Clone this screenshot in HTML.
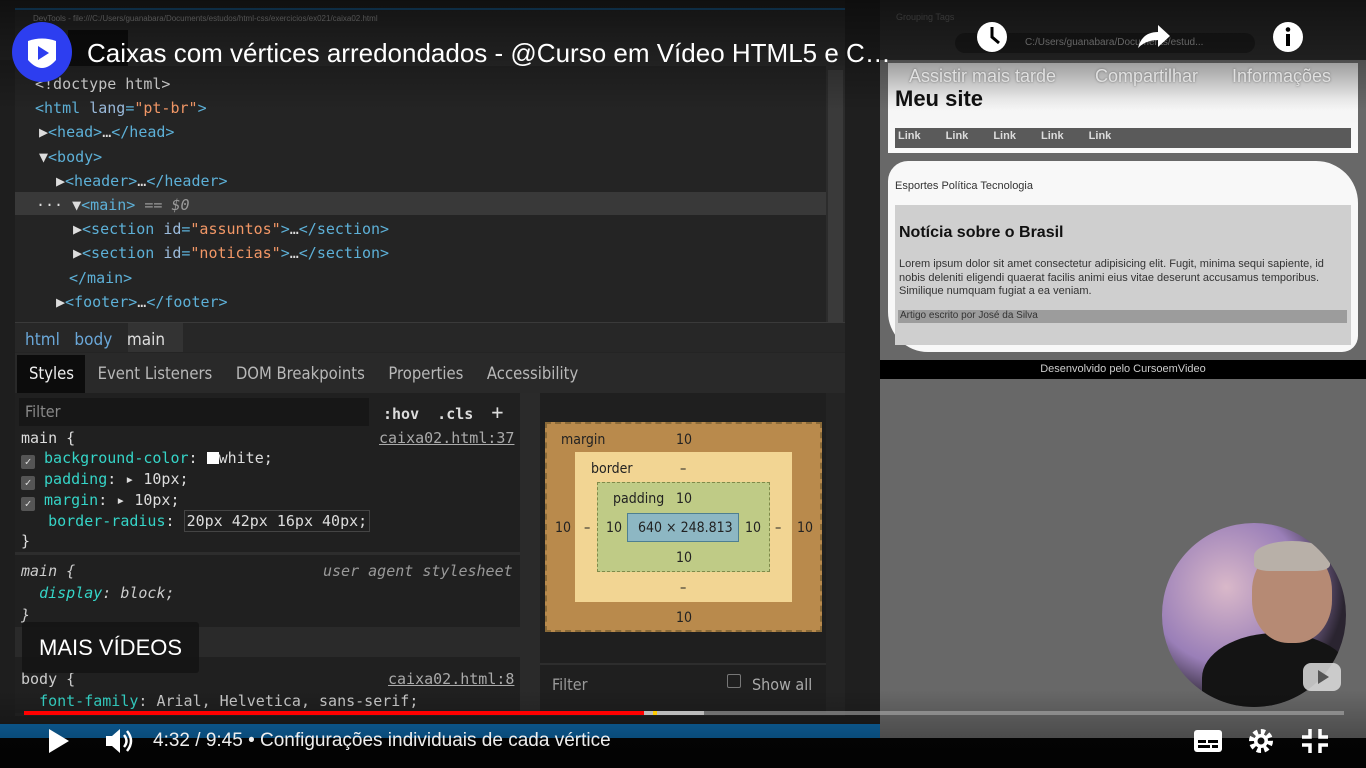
<!DOCTYPE html>
<html><head><meta charset="utf-8"><style>
*{margin:0;padding:0;box-sizing:border-box}
body{width:1366px;height:768px;overflow:hidden;background:#1c1c1c;position:relative;font-family:"Liberation Sans",sans-serif}
.a{position:absolute}
.mono{font-family:"DejaVu Sans Mono","Liberation Mono",monospace;font-size:15px;white-space:nowrap}
.tag{color:#5db0d7}.attr{color:#9bbbdc}.val{color:#f29766}.txt{color:#ddd}
.prop{color:#35d4c7}.w{color:#e8e8e8}
.ui{font-family:"DejaVu Sans Condensed","Liberation Sans",sans-serif;font-size:16px;color:#b8b8b8;white-space:nowrap}
</style></head><body>
<div class="a" style="left:0;top:0;width:880px;height:740px;background:#242424"></div>
<div class="a" style="left:15px;top:8px;width:830px;height:2px;background:#1b5a8a"></div>
<div class="a" style="left:15px;top:10px;width:830px;height:18px;background:#2a2a2a;font-size:8px;color:#999;padding:4px 18px">DevTools - file:///C:/Users/guanabara/Documents/estudos/html-css/exercicios/ex021/caixa02.html</div>
<div class="a" style="left:15px;top:28px;width:830px;height:38px;background:#2b2b2b"></div>
<div class="a" style="left:68px;top:30px;width:60px;height:36px;background:#0f0f0f"></div>
<div class="a" style="left:0;top:60px;width:15px;height:680px;background:#1e1e1e"></div>
<div class="a" style="left:15px;top:66px;width:811px;height:256px;background:#242424"></div>
<div class="a" style="left:15px;top:192px;width:811px;height:23px;background:#393939"></div>
<div class="a" style="left:826px;top:66px;width:19px;height:256px;background:#2c2c2c"></div>
<div class="a" style="left:828px;top:70px;width:15px;height:270px;background:#3a3a3a"></div>
<div class="a mono" style="left:35px;top:72px;line-height:24.2px">
<div class="txt">&lt;!doctype html&gt;</div>
<div><span class="tag">&lt;html</span> <span class="attr">lang</span><span class="tag">=</span><span class="val">"pt-br"</span><span class="tag">&gt;</span></div>
<div style="padding-left:4px"><span class="txt">▶</span><span class="tag">&lt;head&gt;</span><span class="txt">…</span><span class="tag">&lt;/head&gt;</span></div>
<div style="padding-left:4px"><span class="txt">▼</span><span class="tag">&lt;body&gt;</span></div>
<div style="padding-left:21px"><span class="txt">▶</span><span class="tag">&lt;header&gt;</span><span class="txt">…</span><span class="tag">&lt;/header&gt;</span></div>
<div style="padding-left:21px;margin-left:-20px"><span class="txt">··· ▼</span><span class="tag">&lt;main&gt;</span> <span style="color:#999">== <i>$0</i></span></div>
<div style="padding-left:38px"><span class="txt">▶</span><span class="tag">&lt;section</span> <span class="attr">id</span><span class="tag">=</span><span class="val">"assuntos"</span><span class="tag">&gt;</span><span class="txt">…</span><span class="tag">&lt;/section&gt;</span></div>
<div style="padding-left:38px"><span class="txt">▶</span><span class="tag">&lt;section</span> <span class="attr">id</span><span class="tag">=</span><span class="val">"noticias"</span><span class="tag">&gt;</span><span class="txt">…</span><span class="tag">&lt;/section&gt;</span></div>
<div style="padding-left:34px"><span class="tag">&lt;/main&gt;</span></div>
<div style="padding-left:21px"><span class="txt">▶</span><span class="tag">&lt;footer&gt;</span><span class="txt">…</span><span class="tag">&lt;/footer&gt;</span></div>
</div>
<div class="a" style="left:15px;top:322px;width:830px;height:30px;background:#272727;border-top:1px solid #3a3a3a"></div>
<div class="a" style="left:128px;top:323px;width:55px;height:29px;background:#333"></div>
<div class="a ui" style="left:25px;top:330px;font-size:17px"><span style="color:#6aa7d8">html</span>&nbsp;&nbsp;&nbsp;<span style="color:#6aa7d8">body</span>&nbsp;&nbsp;&nbsp;<span style="color:#ddd">main</span></div>
<div class="a" style="left:15px;top:353px;width:830px;height:40px;background:#292929"></div>
<div class="a" style="left:17px;top:355px;width:68px;height:38px;background:#0c0c0c"></div>
<div class="a ui" style="left:29px;top:364px;font-size:16.5px"><span style="color:#eee">Styles</span>&nbsp;&nbsp;&nbsp;&nbsp;&nbsp;Event Listeners&nbsp;&nbsp;&nbsp;&nbsp;&nbsp;DOM Breakpoints&nbsp;&nbsp;&nbsp;&nbsp;&nbsp;Properties&nbsp;&nbsp;&nbsp;&nbsp;&nbsp;Accessibility</div>
<div class="a" style="left:15px;top:393px;width:508px;height:320px;background:#202020"></div>
<div class="a" style="left:19px;top:398px;width:350px;height:28px;background:#171717"></div>
<div class="a ui" style="left:25px;top:402px;color:#888">Filter</div>
<div class="a mono" style="left:383px;top:400px;color:#ddd;font-weight:bold">:hov&nbsp; .cls&nbsp; <span style="font-size:20px;font-weight:normal">+</span></div>
<div class="a" style="left:520px;top:393px;width:20px;height:320px;background:#2a2a2a"></div>
<div class="a mono" style="left:21px;top:428px;line-height:20px;color:#ddd">
<div>main {<span style="position:absolute;left:358px;text-decoration:underline;color:#aaa">caixa02.html:37</span></div>
<div><span style="display:inline-block;width:14px;height:14px;background:#555;border-radius:2px;vertical-align:-2px;color:#ddd;font-size:11px;text-align:center;line-height:14px">✓</span> <span class="prop">background-color</span>: <span style="display:inline-block;width:12px;height:12px;background:#fff;vertical-align:-1px"></span>white;</div>
<div><span style="display:inline-block;width:14px;height:14px;background:#555;border-radius:2px;vertical-align:-2px;font-size:11px;text-align:center;line-height:14px">✓</span> <span class="prop">padding</span>: ▸ 10px;</div>
<div><span style="display:inline-block;width:14px;height:14px;background:#555;border-radius:2px;vertical-align:-2px;font-size:11px;text-align:center;line-height:14px">✓</span> <span class="prop">margin</span>: ▸ 10px;</div>
<div>&nbsp;&nbsp;&nbsp;<span class="prop">border-radius</span>: <span style="border:1px solid #444;padding:1px 2px">20px 42px 16px 40px;</span></div>
<div>}</div>
</div>
<div class="a" style="left:15px;top:552px;width:505px;height:3px;background:#2d2d2d"></div>
<div class="a mono" style="left:21px;top:560px;line-height:22px;color:#ccc;font-style:italic">
<div>main {<span style="position:absolute;left:302px;color:#999">user agent stylesheet</span></div>
<div>&nbsp;&nbsp;<span class="prop">display</span>: block;</div>
<div>}</div>
</div>
<div class="a" style="left:15px;top:627px;width:505px;height:30px;background:#2a2a2a"></div>
<div class="a mono" style="left:21px;top:668px;line-height:22px;color:#ccc">
<div>body {<span style="position:absolute;left:367px;text-decoration:underline;color:#aaa">caixa02.html:8</span></div>
<div>&nbsp;&nbsp;<span class="prop">font-family</span>: Arial, Helvetica, sans-serif;</div>
</div>
<div class="a" style="left:540px;top:393px;width:286px;height:320px;background:#1f1f1f"></div>
<div class="a" style="left:545px;top:422px;width:277px;height:210px;background:#b98a4c;border:2px dashed #8a6a38"></div>
<div class="a" style="left:575px;top:452px;width:217px;height:150px;background:#f2d593"></div>
<div class="a" style="left:597px;top:482px;width:173px;height:90px;background:#bfcb86;border:1px dashed #7f8a4a"></div>
<div class="a" style="left:627px;top:513px;width:112px;height:29px;background:#8db7c3;border:1px solid #4e7f90"></div>
<div class="a ui" style="font-family:'DejaVu Sans Condensed',sans-serif;font-size:14px;color:#222;left:0;top:0">
<span class="a" style="left:561px;top:432px">margin</span><span class="a" style="left:676px;top:432px">10</span>
<span class="a" style="left:591px;top:461px">border</span><span class="a" style="left:680px;top:461px">–</span>
<span class="a" style="left:613px;top:491px">padding</span><span class="a" style="left:676px;top:491px">10</span>
<span class="a" style="left:638px;top:520px">640 × 248.813</span>
<span class="a" style="left:555px;top:520px">10</span><span class="a" style="left:584px;top:520px">–</span><span class="a" style="left:606px;top:520px">10</span>
<span class="a" style="left:745px;top:520px">10</span><span class="a" style="left:775px;top:520px">–</span><span class="a" style="left:797px;top:520px">10</span>
<span class="a" style="left:676px;top:550px">10</span><span class="a" style="left:680px;top:580px">–</span><span class="a" style="left:676px;top:610px">10</span>
</div>
<div class="a" style="left:540px;top:663px;width:286px;height:2px;background:#2d2d2d"></div>
<div class="a ui" style="left:552px;top:675px;color:#999">Filter</div>
<div class="a" style="left:727px;top:674px;width:14px;height:14px;border:1px solid #777;border-radius:2px"></div>
<div class="a ui" style="left:752px;top:675px;color:#aaa">Show all</div>
<div class="a" style="left:845px;top:0;width:35px;height:740px;background:#1f1f1f"></div>
<div class="a" style="left:880px;top:0;width:486px;height:60px;background:#2a2a2a"></div>
<div class="a" style="left:955px;top:33px;width:300px;height:20px;border-radius:10px;background:#1c1c1c;font-size:10px;color:#999;padding:4px 0 0 70px">C:/Users/guanabara/Documents/estud...</div>
<div class="a" style="left:896px;top:12px;font-size:9px;color:#666">Grouping Tags</div>
<div class="a" style="left:880px;top:60px;width:486px;height:680px;background:#686868"></div>
<div class="a" style="left:888px;top:63px;width:470px;height:90px;background:linear-gradient(#d0d0d0,#f4f4f4 40%,#fafafa)"></div>
<div class="a" style="left:895px;top:86px;font-size:22px;font-weight:bold;color:#111">Meu site</div>
<div class="a" style="left:895px;top:128px;width:456px;height:20px;background:#5a5a5a;font-size:11px;font-weight:bold;color:#ddd;padding:2px 0 0 3px;word-spacing:22px">Link Link Link Link Link</div>
<div class="a" style="left:888px;top:161px;width:470px;height:191px;background:#f8f8f8;border-radius:20px 42px 16px 40px"></div>
<div class="a" style="left:895px;top:180px;font-size:11px;color:#333">Esportes Política Tecnologia</div>
<div class="a" style="left:895px;top:205px;width:456px;height:140px;background:#cfcfcf"></div>
<div class="a" style="left:899px;top:224px;font-size:16px;font-weight:bold;color:#111">Notícia sobre o Brasil</div>
<div class="a" style="left:899px;top:258px;width:450px;font-size:11px;line-height:13.5px;color:#333">Lorem ipsum dolor sit amet consectetur adipisicing elit. Fugit, minima sequi sapiente, id nobis deleniti eligendi quaerat facilis animi eius vitae deserunt accusamus temporibus. Similique numquam fugiat a ea veniam.</div>
<div class="a" style="left:898px;top:310px;width:449px;height:13px;background:#9c9c9c;font-size:10px;color:#333;padding-left:2px">Artigo escrito por José da Silva</div>
<div class="a" style="left:880px;top:360px;width:486px;height:19px;background:#000;color:#ccc;font-size:11px;text-align:center;padding-top:3px">Desenvolvido pelo CursoemVideo</div>
<div class="a" style="left:1162px;top:523px;width:184px;height:184px;border-radius:50%;background:radial-gradient(circle at 35% 35%,#d9b8c9,#9a7fb8 45%,#2a2430 70%);overflow:hidden">
<div class="a" style="left:40px;top:110px;width:150px;height:90px;background:#141414;border-radius:50% 50% 0 0"></div>
<div class="a" style="left:90px;top:25px;width:80px;height:95px;border-radius:45%;background:#b68a74"></div>
<div class="a" style="left:92px;top:18px;width:76px;height:30px;border-radius:50% 50% 20% 20%;background:#b8b0a8"></div>
</div>
<svg class="a" style="left:1302px;top:662px" width="40" height="30"><rect x="1" y="1" width="38" height="28" rx="8" fill="#ddd" opacity=".85"/><path d="M16 8 L27 15 L16 22Z" fill="#555"/></svg>
<div class="a" style="left:0;top:0;width:1366px;height:110px;background:linear-gradient(rgba(0,0,0,.55),rgba(0,0,0,0))"></div>
<svg class="a" style="left:12px;top:22px" width="60" height="60"><circle cx="30" cy="30" r="30" fill="#2d3ef0"/><path d="M16 19 Q30 14 44 19 L44 38 Q37 46 30 46 Q23 46 16 38Z" fill="#fff"/><path d="M26 24 L37 31 L26 38Z" fill="#2d3ef0"/></svg>
<div class="a" style="left:87px;top:38px;font-size:26px;color:#fff;white-space:nowrap">Caixas com vértices arredondados - @Curso em Vídeo HTML5 e C…</div>
<svg class="a" style="left:975px;top:20px" width="34" height="34"><circle cx="17" cy="17" r="15" fill="#fff"/><path d="M17 7 V17 L24 23" stroke="#000" stroke-width="3" fill="none"/></svg>
<svg class="a" style="left:1136px;top:22px" width="36" height="28"><path d="M2 26 Q6 10 22 10 V3 L34 14 L22 25 V18 Q10 18 2 26Z" fill="#fff"/></svg>
<svg class="a" style="left:1271px;top:20px" width="34" height="34"><circle cx="17" cy="17" r="15" fill="#fff"/><rect x="15" y="14" width="4" height="12" fill="#000"/><circle cx="17" cy="9.5" r="2.3" fill="#000"/></svg>
<div class="a" style="left:909px;top:66px;font-size:18px;color:#e0e0e0;white-space:nowrap;text-shadow:0 0 2px #666">Assistir mais tarde</div>
<div class="a" style="left:1095px;top:66px;font-size:18px;color:#e0e0e0;white-space:nowrap;text-shadow:0 0 2px #666">Compartilhar</div>
<div class="a" style="left:1232px;top:66px;font-size:18px;color:#e0e0e0;white-space:nowrap;text-shadow:0 0 2px #666">Informações</div>
<div class="a" style="left:22px;top:622px;width:177px;height:51px;background:rgba(20,20,20,.9);border-radius:3px"></div>
<div class="a" style="left:39px;top:635px;font-size:22px;color:#fff">MAIS VÍDEOS</div>
<div class="a" style="left:0;top:716px;width:880px;height:8px;background:#1e1e1e"></div>
<div class="a" style="left:0;top:724px;width:880px;height:14px;background:#0e68a8"></div>
<div class="a" style="left:0;top:738px;width:1366px;height:30px;background:#050505"></div>
<div class="a" style="left:0;top:690px;width:1366px;height:78px;background:linear-gradient(rgba(0,0,0,0),rgba(0,0,0,.45))"></div>
<div class="a" style="left:24px;top:711px;width:1320px;height:4px;background:rgba(180,180,180,.55)"></div>
<div class="a" style="left:24px;top:711px;width:620px;height:4px;background:#f00"></div>
<div class="a" style="left:644px;top:711px;width:60px;height:4px;background:#bbb"></div>
<div class="a" style="left:653px;top:711px;width:4px;height:4px;background:#fc0"></div>
<svg class="a" style="left:46px;top:727px" width="26" height="28"><path d="M3 2 L23 14 L3 26Z" fill="#fff"/></svg>
<svg class="a" style="left:104px;top:727px" width="32" height="28"><path d="M2 9 H8 L16 2 V26 L8 19 H2Z" fill="#fff"/><path d="M20 8 Q25 14 20 20 M23 4 Q31 14 23 24" stroke="#fff" stroke-width="2.5" fill="none"/></svg>
<div class="a" style="left:153px;top:730px;font-size:19px;color:#eee;white-space:nowrap">4:32 / 9:45 • Configurações individuais de cada vértice</div>
<svg class="a" style="left:1193px;top:728px" width="30" height="26"><rect x="1" y="2" width="28" height="22" rx="3" fill="#fff"/><rect x="5" y="12" width="8" height="3" fill="#000"/><rect x="15" y="12" width="10" height="3" fill="#000"/><rect x="5" y="17" width="12" height="3" fill="#000"/><rect x="19" y="17" width="6" height="3" fill="#000"/></svg>
<svg class="a" style="left:1247px;top:727px" width="28" height="28"><circle cx="14" cy="14" r="9" fill="none" stroke="#fff" stroke-width="6" stroke-dasharray="4 3"/><circle cx="14" cy="14" r="7" fill="#fff"/><circle cx="14" cy="14" r="3.5" fill="#111"/></svg>
<svg class="a" style="left:1300px;top:727px" width="30" height="28"><path d="M10 2 V10 H2 M20 2 V10 H28 M10 26 V18 H2 M20 26 V18 H28" stroke="#fff" stroke-width="3.5" fill="none"/></svg>
</body></html>
